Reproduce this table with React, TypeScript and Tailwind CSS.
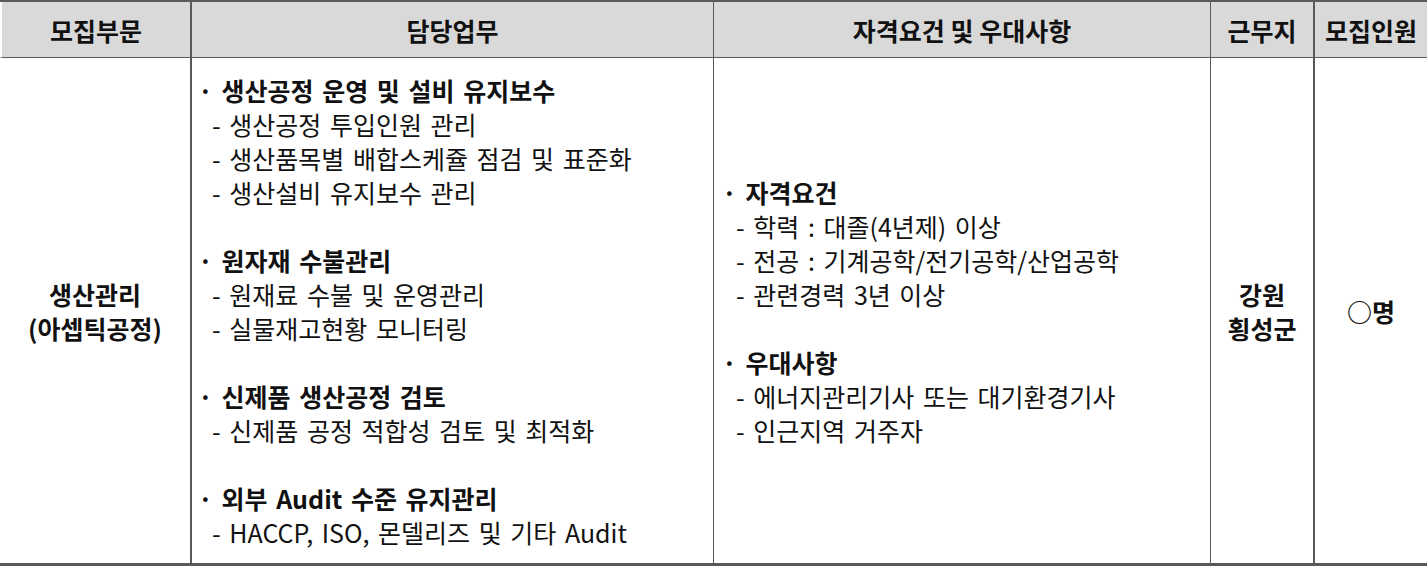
import React from 'react';

const duties = [
  { title: '생산공정 운영 및 설비 유지보수', items: ['생산공정 투입인원 관리', '생산품목별 배합스케쥴 점검 및 표준화', '생산설비 유지보수 관리'] },
  { title: '원자재 수불관리', items: ['원재료 수불 및 운영관리', '실물재고현황 모니터링'] },
  { title: '신제품 생산공정 검토', items: ['신제품 공정 적합성 검토 및 최적화'] },
  { title: '외부 Audit 수준 유지관리', items: ['HACCP, ISO, 몬델리즈 및 기타 Audit'] },
];

const reqs = [
  { title: '자격요건', items: ['학력 : 대졸(4년제) 이상', '전공 : 기계공학/전기공학/산업공학', '관련경력 3년 이상'] },
  { title: '우대사항', items: ['에너지관리기사 또는 대기환경기사', '인근지역 거주자'] },
];

type Group = { title: string; items: string[] };

const GroupList = ({ groups }: { groups: Group[] }) => (
  <div className="flex flex-col gap-[34px] [word-spacing:3px]">
    {groups.map((g) => (
      <div key={g.title} className="flex flex-col">
        <div className="font-bold whitespace-pre">{'· ' + g.title}</div>
        {g.items.map((it) => (
          <div key={it} className="whitespace-pre pl-[14px]">{'- ' + it}</div>
        ))}
      </div>
    ))}
  </div>
);

export default function App() {
  const th = 'h-[56px] flex items-center justify-center font-bold bg-[#d9d9d9] border-b border-[#595959]';
  return (
    <div
      className="w-[1427px] bg-white text-[#111] text-[25px] leading-[34px]"
      style={{ fontFamily: '"Noto Sans CJK KR", "Noto Sans", sans-serif' }}
    >
      <div className="border-t-2 border-b-[3px] border-[#595959] grid grid-cols-[192px_522px_497px_104px_112px]">
        {/* header */}
        <div className={th + ' border-r-2 border-l-2 border-l-white'}>모집부문</div>
        <div className={th + ' border-r'}>담당업무</div>
        <div className={th + ' border-r'}>자격요건 및 우대사항</div>
        <div className={th + ' border-r-2'}>근무지</div>
        <div className={th}>모집인원</div>

        {/* body */}
        <div className="h-[505px] border-r-2 border-[#595959] flex flex-col items-center justify-center font-bold text-center">
          <div>생산관리</div>
          <div>(아셉틱공정)</div>
        </div>
        <div className="border-r border-[#595959] flex flex-col justify-center pl-[6px]">
          <GroupList groups={duties} />
        </div>
        <div className="border-r border-[#595959] flex flex-col justify-center pl-[8px]">
          <GroupList groups={reqs} />
        </div>
        <div className="border-r-2 border-[#595959] flex flex-col items-center justify-center font-bold">
          <div>강원</div>
          <div>횡성군</div>
        </div>
        <div className="flex items-center justify-center font-bold">○명</div>
      </div>
    </div>
  );
}
